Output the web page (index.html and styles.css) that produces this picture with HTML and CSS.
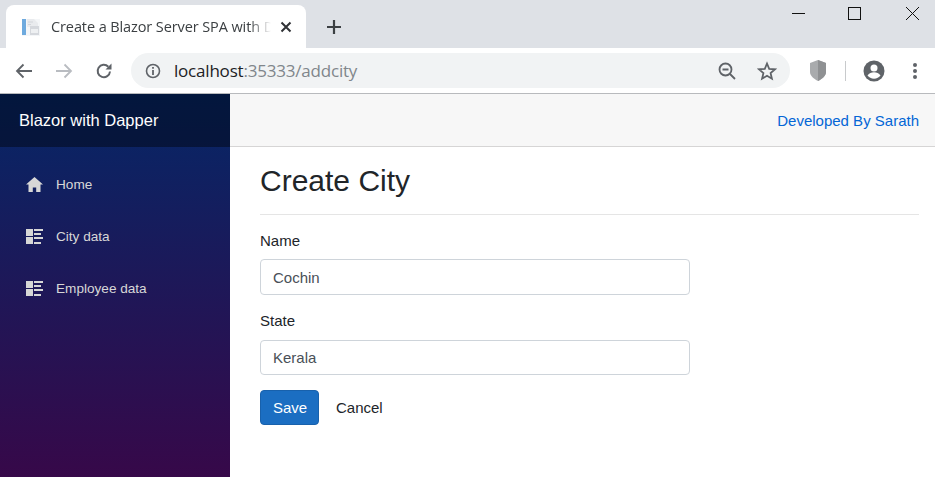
FILE: index.html
```html
<!DOCTYPE html>
<html lang="en">
<head>
<meta charset="utf-8">
<title>Create City</title>
<link rel="stylesheet" href="styles.css">
</head>
<body>
<div class="browser">
  <div class="tabstrip">
    <div class="tab">
      <svg class="favicon" width="18" height="18" viewBox="0 0 18 18"><path d="M0 1h18v17H0z" fill="#f4f6f8"/><rect x="0" y="1" width="4" height="16" fill="#6eaade"/><path d="M5 1h7l4 4v4H5z" fill="#e9ebee"/><path d="M6 4h5M6 6.500h3" stroke="#d2d5da" stroke-width="1"/><rect x="8" y="8" width="9" height="9" fill="#d5d8dd"/><rect x="9" y="11" width="7" height="4" fill="#eef0f2"/></svg>
      <span class="tab-title">Create a Blazor Server SPA with D</span>
      <svg class="tab-close" width="12" height="12" viewBox="0 0 12 12"><path d="M1.500 1.500l9 9M10.500 1.500l-9 9" stroke="#303236" stroke-width="2"/></svg>
    </div>
    <svg class="new-tab" width="16" height="16" viewBox="0 0 16 16"><path d="M8 1v14M1 8h14" stroke="#3c4043" stroke-width="2.200"/></svg>
    <div class="window-controls">
      <svg class="win-min" width="14" height="14" viewBox="0 0 14 14"><path d="M1 7.500h13" stroke="#111" stroke-width="1"/></svg>
      <svg width="14" height="14" viewBox="0 0 14 14"><rect x="1.500" y="1.500" width="12" height="12" fill="none" stroke="#111" stroke-width="1"/></svg>
      <svg width="14" height="14" viewBox="0 0 14 14"><path d="M1 1l13 13M14 1L1 14" stroke="#111" stroke-width="1"/></svg>
    </div>
  </div>
  <div class="toolbar">
    <div class="nav-buttons">
      <svg width="18" height="16" viewBox="0 0 18 16"><path d="M17 8H2M8.500 1.500L2 8l6.500 6.500" fill="none" stroke="#5f6368" stroke-width="1.800"/></svg>
      <svg width="18" height="16" viewBox="0 0 18 16"><path d="M1 8h15M9.500 1.500L16 8l-6.500 6.500" fill="none" stroke="#b9bcc1" stroke-width="1.800"/></svg>
      <svg width="18" height="18" viewBox="0 0 18 18"><path d="M15 9.500A6.200 6.200 0 1 1 13.300 4.700" fill="none" stroke="#5f6368" stroke-width="2"/><path d="M10.500 7.500H16.500V1.500z" fill="#5f6368"/></svg>
    </div>
    <div class="omnibox">
      <svg width="16" height="16" viewBox="0 0 16 16"><circle cx="8" cy="8" r="6.500" fill="none" stroke="#5f6368" stroke-width="1.600"/><path d="M8 7v5M8 4v1.800" stroke="#5f6368" stroke-width="1.800"/></svg>
      <span class="url"><span class="host">localhost</span>:35333/addcity</span>
      <svg class="omni-zoom" width="18" height="18" viewBox="0 0 18 18"><circle cx="7.500" cy="7.500" r="6" fill="none" stroke="#5f6368" stroke-width="1.800"/><path d="M4.500 7.500h6M12 12l5 5" stroke="#5f6368" stroke-width="1.800"/></svg>
      <svg width="20" height="20" viewBox="0 0 20 20"><path d="M10 2.500l2.200 5.300 5.800.5-4.400 3.800 1.300 5.600L10 14.700l-4.900 3 1.300-5.600L2 8.300l5.800-.5z" fill="none" stroke="#5f6368" stroke-width="1.800"/></svg>
    </div>
    <div class="toolbar-right">
      <svg width="16" height="21" viewBox="0 0 16 21"><path d="M8 0l8 3v9c0 4-4 7-8 9-4-2-8-5-8-9V3z" fill="#a9abad"/><path d="M8 0l8 3v9c0 4-4 7-8 9z" fill="#8f9193"/></svg>
      <span class="toolbar-sep"></span>
      <svg width="22" height="22" viewBox="0 0 22 22"><circle cx="11" cy="11" r="10.500" fill="#5f6368"/><circle cx="11" cy="8" r="3.500" fill="#fff"/><path d="M4.500 15.500c1.500-2.500 4-3.200 6.500-3.200s5 .7 6.500 3.200c-1.500 2-3.800 3.200-6.500 3.200s-5-1.200-6.500-3.200z" fill="#fff"/></svg>
      <svg width="4" height="16" viewBox="0 0 4 16"><circle cx="2" cy="2" r="2" fill="#5f6368"/><circle cx="2" cy="8" r="2" fill="#5f6368"/><circle cx="2" cy="14" r="2" fill="#5f6368"/></svg>
    </div>
  </div>
  <div class="app">
    <aside class="sidebar">
      <div class="brand">Blazor with Dapper</div>
      <nav class="nav">
        <a class="nav-item" href="#">
          <svg class="nav-icon" width="17" height="15" viewBox="0 0 17 15"><path d="M8.500 0L0 7.500h2.500V15h4.300v-4.500h3.400V15h4.300V7.500H17z" fill="#d7d7d7"/></svg>
          <span>Home</span>
        </a>
        <a class="nav-item" href="#">
          <svg class="nav-icon" width="17" height="15" viewBox="0 0 17 15"><path d="M0 0h7v7H0zM0 8h7v7H0zM8 0h9v2H8zM8 4h7v2H8zM8 8h9v2H8zM8 13h7v2H8z" fill="#d7d7d7"/></svg>
          <span>City data</span>
        </a>
        <a class="nav-item" href="#">
          <svg class="nav-icon" width="17" height="15" viewBox="0 0 17 15"><path d="M0 0h7v7H0zM0 8h7v7H0zM8 0h9v2H8zM8 4h7v2H8zM8 8h9v2H8zM8 13h7v2H8z" fill="#d7d7d7"/></svg>
          <span>Employee data</span>
        </a>
      </nav>
    </aside>
    <main class="main">
      <div class="top-row"><a class="top-link" href="#">Developed By Sarath</a></div>
      <div class="content">
        <h1 class="title">Create City</h1>
        <hr class="rule">
        <form class="form">
          <label class="label" for="name">Name</label>
          <input class="input" id="name" type="text" value="Cochin">
          <label class="label" for="state">State</label>
          <input class="input input-state" id="state" type="text" value="Kerala">
          <div class="actions">
            <button class="btn btn-save" type="button">Save</button>
            <button class="btn btn-cancel" type="button">Cancel</button>
          </div>
        </form>
      </div>
    </main>
  </div>
</div>
</body>
</html>
```
FILE: styles.css
```css
* { box-sizing: border-box; }
html, body { margin: 0; height: 100%; overflow: hidden; }
body { font-family: "Liberation Sans", Arial, sans-serif; color: #212529; background: #fff; }
.browser { display: flex; flex-direction: column; height: 477px; }

.tabstrip { display: flex; align-items: flex-start; height: 48px; background: #dee1e6; padding: 5px 0 0 6px; flex: none; }
.tab { display: flex; align-items: center; width: 300px; height: 43px; background: #fff; border-radius: 8px 8px 0 0; padding: 0 14px 0 16px; }
.favicon { flex: none; margin-right: 11px; }
.tab-title { flex: 1; font: 14.500px "Open Sans", sans-serif; color: #3c4043; white-space: nowrap; overflow: hidden; -webkit-mask-image: linear-gradient(90deg, #000 90%, transparent); mask-image: linear-gradient(90deg, #000 90%, transparent); letter-spacing: -0.100px; }
.tab-close { flex: none; margin-left: 9px; }
.new-tab { margin: 14px 0 0 20px; flex: none; }
.window-controls { margin-left: auto; display: flex; gap: 44px; padding: 1px 16px 0 0; }
.win-min { margin-right: -2px; }

.toolbar { display: flex; align-items: center; height: 46px; background: #fff; border-bottom: 1px solid #b8babd; padding: 0 13px 0 15px; flex: none; }
.nav-buttons { display: flex; align-items: center; gap: 22px; width: 116px; flex: none; }
.omnibox { display: flex; align-items: center; width: 659px; height: 35px; background: #f1f3f4; border-radius: 18px; padding: 0 13px 0 14px; flex: none; }
.url { flex: 1; margin-left: 13px; font: 17px "Open Sans", sans-serif; color: #80868b; letter-spacing: -0.200px; }
.host { color: #202124; }
.omni-zoom { margin-right: 21px; }
.toolbar-right { display: flex; align-items: center; flex: 1; margin-left: 20px; }
.toolbar-sep { width: 1px; height: 20px; background: #c8cacc; margin: 0 17px 0 19px; }
.toolbar-right svg:last-child { margin-left: 28px; }

.app { display: flex; flex: 1; min-height: 0; }
.sidebar { width: 230px; flex: none; background: linear-gradient(180deg, #052767, #3a0647 107%); color: #fff; }
.brand { height: 53px; display: flex; align-items: center; padding-left: 19px; background: rgba(0, 0, 0, 0.4); font-size: 16.500px; }
.nav { display: flex; flex-direction: column; padding-top: 11px; }
.nav-item { display: flex; align-items: center; height: 52.400px; padding-left: 26px; color: #d7d7d7; text-decoration: none; font-size: 13.600px; }
.nav-icon { margin-right: 13px; flex: none; }

.main { flex: 1; min-width: 0; }
.top-row { height: 53px; background: #f7f7f7; border-bottom: 1px solid #d6d5d5; display: flex; align-items: center; justify-content: flex-end; padding-right: 16px; }
.top-link { color: #0366d6; text-decoration: none; font-size: 15px; }
.content { padding: 0 16px 0 30px; }
.title { margin: 15px 0 0; font-size: 30px; font-weight: 400; line-height: 38px; }
.rule { margin: 14px 0 0; border: 0; border-top: 1px solid rgba(0, 0, 0, 0.1); }
.form { display: flex; flex-direction: column; align-items: flex-start; padding-top: 16px; }
.label { font-size: 15px; line-height: 20px; margin-bottom: 8px; }
.input { width: 430px; height: 36px; border: 1px solid #ced4da; border-radius: 4px; padding: 0 12px; font: 15px "Liberation Sans", Arial, sans-serif; color: #495057; margin-bottom: 16px; background: #fff; }
.input-state { height: 35px; margin-top: 1px; margin-bottom: 15px; }
.actions { display: flex; align-items: center; }
.btn { height: 35px; border: 1px solid transparent; border-radius: 4px; padding: 0 12px; font: 15px "Liberation Sans", Arial, sans-serif; background: none; color: #212529; }
.btn-save { background: #1b6ec2; border-color: #1861ac; color: #fff; width: 59px; }
.btn-cancel { padding: 0 16px; }
```
